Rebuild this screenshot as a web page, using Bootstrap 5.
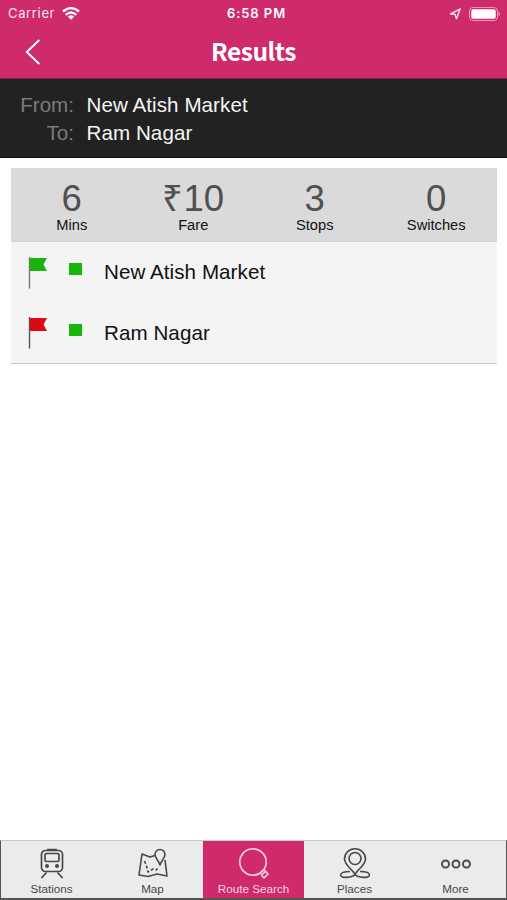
<!DOCTYPE html>
<html lang="en">
<head>
<meta charset="utf-8">
<meta name="viewport" content="width=device-width, initial-scale=1">
<title>Results</title>
<link href="https://cdn.jsdelivr.net/npm/bootstrap@5.3.0/dist/css/bootstrap.min.css" rel="stylesheet">
<style>
  :root { --pink: #ce2a6c; }
  body { font-family: "Liberation Sans", Arial, sans-serif; color: #111; }
  .screen { height: 900px; }
  .top { background: var(--pink); height: 79px; border-bottom: 1px solid #85204a; }
  .status { height: 27px; font: 500 13px/27px Inter, sans-serif; padding: 0 7px 0 8px; }
  .status .carrier { font-weight: 400; letter-spacing: .65px; opacity: .9; }
  .status .wifi { margin-left: 7px; }
  .status .clock { font-weight: 600; letter-spacing: .95px; padding-left: 5px; }
  .side { flex: 1 1 0; }
  .titlebar { height: 50px; padding: 0 25px; }
  .titlebar h1 { font: 700 24.5px/49px "Noto Sans CJK SC", sans-serif; letter-spacing: -.45px; padding-bottom: 3px; }
  .trip { background: #222; height: 79px; padding: 12px 0 0; font-size: 20.6px; line-height: 28px; border-bottom: 1px solid #111; }
  .trip .key { width: 74px; margin-right: 12.5px; color: #7b7b7b; }
  .trip .val { color: #f5f5f5; letter-spacing: .06px; }
  .result { margin: 10px 10px 0 11px; background: #f4f4f4; border-bottom: 1px solid #c8c8c8; }
  .totals { background: #dadada; height: 74px; border-bottom: 1px solid #d2d2d2; }
  .totals .num { font-size: 36.5px; line-height: 36px; color: #505050; padding-top: 13px; }
  .totals .cap { font-size: 14.7px; line-height: 17px; }
  .stop { height: 61px; padding-left: 17px; font-size: 20.6px; letter-spacing: .06px; }
  .stop:last-child { height: 60px; }
  .stop .dot { width: 13px; height: 12px; background: #18b40b; margin: 0 22px 7px 21px; }
  .tabs { height: 60px; background: #ebebeb; border: solid #555; border-width: 1px 1px 2px; border-top-color: #c9c9c9; font-size: 11.7px; line-height: 14px; }
  .tabs a { flex: 1 1 0; color: #484848; padding-top: 7px; }
  .tabs a.active { background: var(--pink); color: #fbd3e3; }
  .tabs span { margin-top: 2px; }
  svg { display: block; }
</style>
</head>
<body>
<div class="screen d-flex flex-column overflow-hidden bg-white">
  <header class="top text-white">
    <div class="status d-flex align-items-center">
      <div class="side d-flex align-items-center">
        <span class="carrier">Carrier</span>
        <svg class="wifi" width="18" height="13" viewBox="0 0 18 13" fill="none" stroke="#fff" stroke-width="2.3"><path d="M1 4.500Q9-2.200 17 4.500M3.700 7.800Q9 3.200 14.300 7.800"/><path d="M5.900 9.700Q9 6.900 12.100 9.700L9 12.700Z" fill="#fff" stroke="none"/></svg>
      </div>
      <span class="clock">6:58 PM</span>
      <div class="side d-flex align-items-center justify-content-end">
        <svg width="12" height="12" viewBox="0 0 12 12" fill="none" stroke="#fbd9e7" stroke-width="1.5" stroke-linejoin="round"><path d="M11.200 .8L1.500 6L6 6.200L7.500 10.800Z"/></svg>
        <svg class="ms-2" width="31" height="14" viewBox="0 0 31 14"><rect x=".5" y=".5" width="28" height="13" rx="3.500" fill="none" stroke="#e995b6"/><rect x="2.300" y="2.300" width="24.400" height="9.400" rx="1.800" fill="#fff"/><path d="M29.500 4.800Q31 5.500 31 7T29.500 9.200Z" fill="#e995b6"/></svg>
      </div>
    </div>
    <div class="titlebar d-flex align-items-center">
      <div class="side"><svg width="16" height="26" viewBox="0 0 16 26" fill="none" stroke="#fff" stroke-width="2"><path d="M14.300 1L1.800 13L14.300 25"/></svg></div>
      <h1 class="m-0">Results</h1>
      <div class="side"></div>
    </div>
  </header>

  <section class="trip">
    <div class="d-flex"><span class="key text-end">From:</span><span class="val">New Atish Market</span></div>
    <div class="d-flex"><span class="key text-end">To:</span><span class="val">Ram Nagar</span></div>
  </section>

  <main class="flex-grow-1">
    <div class="result">
      <div class="totals row g-0 text-center">
        <div class="col-3"><div class="num">6</div><div class="cap">Mins</div></div>
        <div class="col-3"><div class="num">₹10</div><div class="cap">Fare</div></div>
        <div class="col-3"><div class="num">3</div><div class="cap">Stops</div></div>
        <div class="col-3"><div class="num">0</div><div class="cap">Switches</div></div>
      </div>
      <div class="stop d-flex align-items-center">
        <svg width="20" height="32" viewBox="0 0 20 32"><path d="M1.500 0V31.500" stroke="#777" stroke-width="1.400"/><path d="M2 1H19L15.500 7.500L19 14H2Z" fill="#18b40b"/></svg>
        <span class="dot"></span><span>New Atish Market</span>
      </div>
      <div class="stop d-flex align-items-center">
        <svg width="20" height="32" viewBox="0 0 20 32"><path d="M1.500 0V31.500" stroke="#555" stroke-width="1.400"/><path d="M2 1H19L15.500 7.500L19 14H2Z" fill="#dc0814"/></svg>
        <span class="dot"></span><span>Ram Nagar</span>
      </div>
    </div>
  </main>

  <nav class="tabs d-flex">
    <a class="d-flex flex-column align-items-center text-decoration-none" href="#">
      <svg width="32" height="32" viewBox="0 0 32 32" fill="none" stroke="#484848" stroke-width="1.700"><rect x="5.500" y="2.500" width="21" height="21" rx="4"/><path d="M12 2.500V1.500H20V2.500"/><rect x="9" y="5.500" width="14" height="8" rx="1.500"/><path d="M10.500 24.500L5.500 30M21.500 24.500L26.500 30"/><circle cx="11" cy="18" r="2" fill="#484848" stroke="none"/><circle cx="21" cy="18" r="2" fill="#484848" stroke="none"/></svg>
      <span>Stations</span>
    </a>
    <a class="d-flex flex-column align-items-center text-decoration-none" href="#">
      <svg width="32" height="32" viewBox="0 0 32 32" fill="none" stroke="#484848" stroke-width="1.600" stroke-linejoin="round"><path d="M18 7.500L13 9L5 6L2 27L11 28.500L20 26L30 28L28 12"/><path d="M23 17C22 13 18 10 18 6.500A5 5 0 0 1 28 6.500C28 10 24 13 23 17Z"/><path d="M7.500 13L9.500 18L11 24L16 21L19.500 22L21 19" stroke-dasharray="3 2"/></svg>
      <span>Map</span>
    </a>
    <a class="active d-flex flex-column align-items-center text-decoration-none" href="#">
      <svg width="32" height="32" viewBox="0 0 32 32" fill="none" stroke="#fbd3e3" stroke-width="1.600" stroke-linejoin="round"><circle cx="15" cy="14" r="13.200"/><path d="M21.500 25.500L26 21.500L30 26L26 30L23.500 27.200L27.500 23.500"/></svg>
      <span>Route Search</span>
    </a>
    <a class="d-flex flex-column align-items-center text-decoration-none" href="#">
      <svg width="32" height="32" viewBox="0 0 32 32" fill="none" stroke="#484848" stroke-width="1.600"><path d="M16 26.500C14 22 5.500 17 5.500 11A10.500 10.200 0 0 1 26.500 11C26.500 17 18 22 16 26.500Z"/><circle cx="16" cy="10.500" r="6"/><path d="M11 23.500C5 23.500 1.500 25 1.500 27C1.500 30.500 13 30 16 26.500C19 30 30.500 30.500 30.500 27C30.500 25 27 23.500 21 23.500"/></svg>
      <span>Places</span>
    </a>
    <a class="d-flex flex-column align-items-center text-decoration-none" href="#">
      <svg width="32" height="32" viewBox="0 0 32 32" fill="none" stroke="#484848" stroke-width="1.900"><circle cx="5.500" cy="16" r="3.500"/><circle cx="16" cy="16" r="3.500"/><circle cx="26.500" cy="16" r="3.500"/></svg>
      <span>More</span>
    </a>
  </nav>
</div>
<script src="https://cdn.jsdelivr.net/npm/bootstrap@5.3.0/dist/js/bootstrap.bundle.min.js"></script>
</body>
</html>
